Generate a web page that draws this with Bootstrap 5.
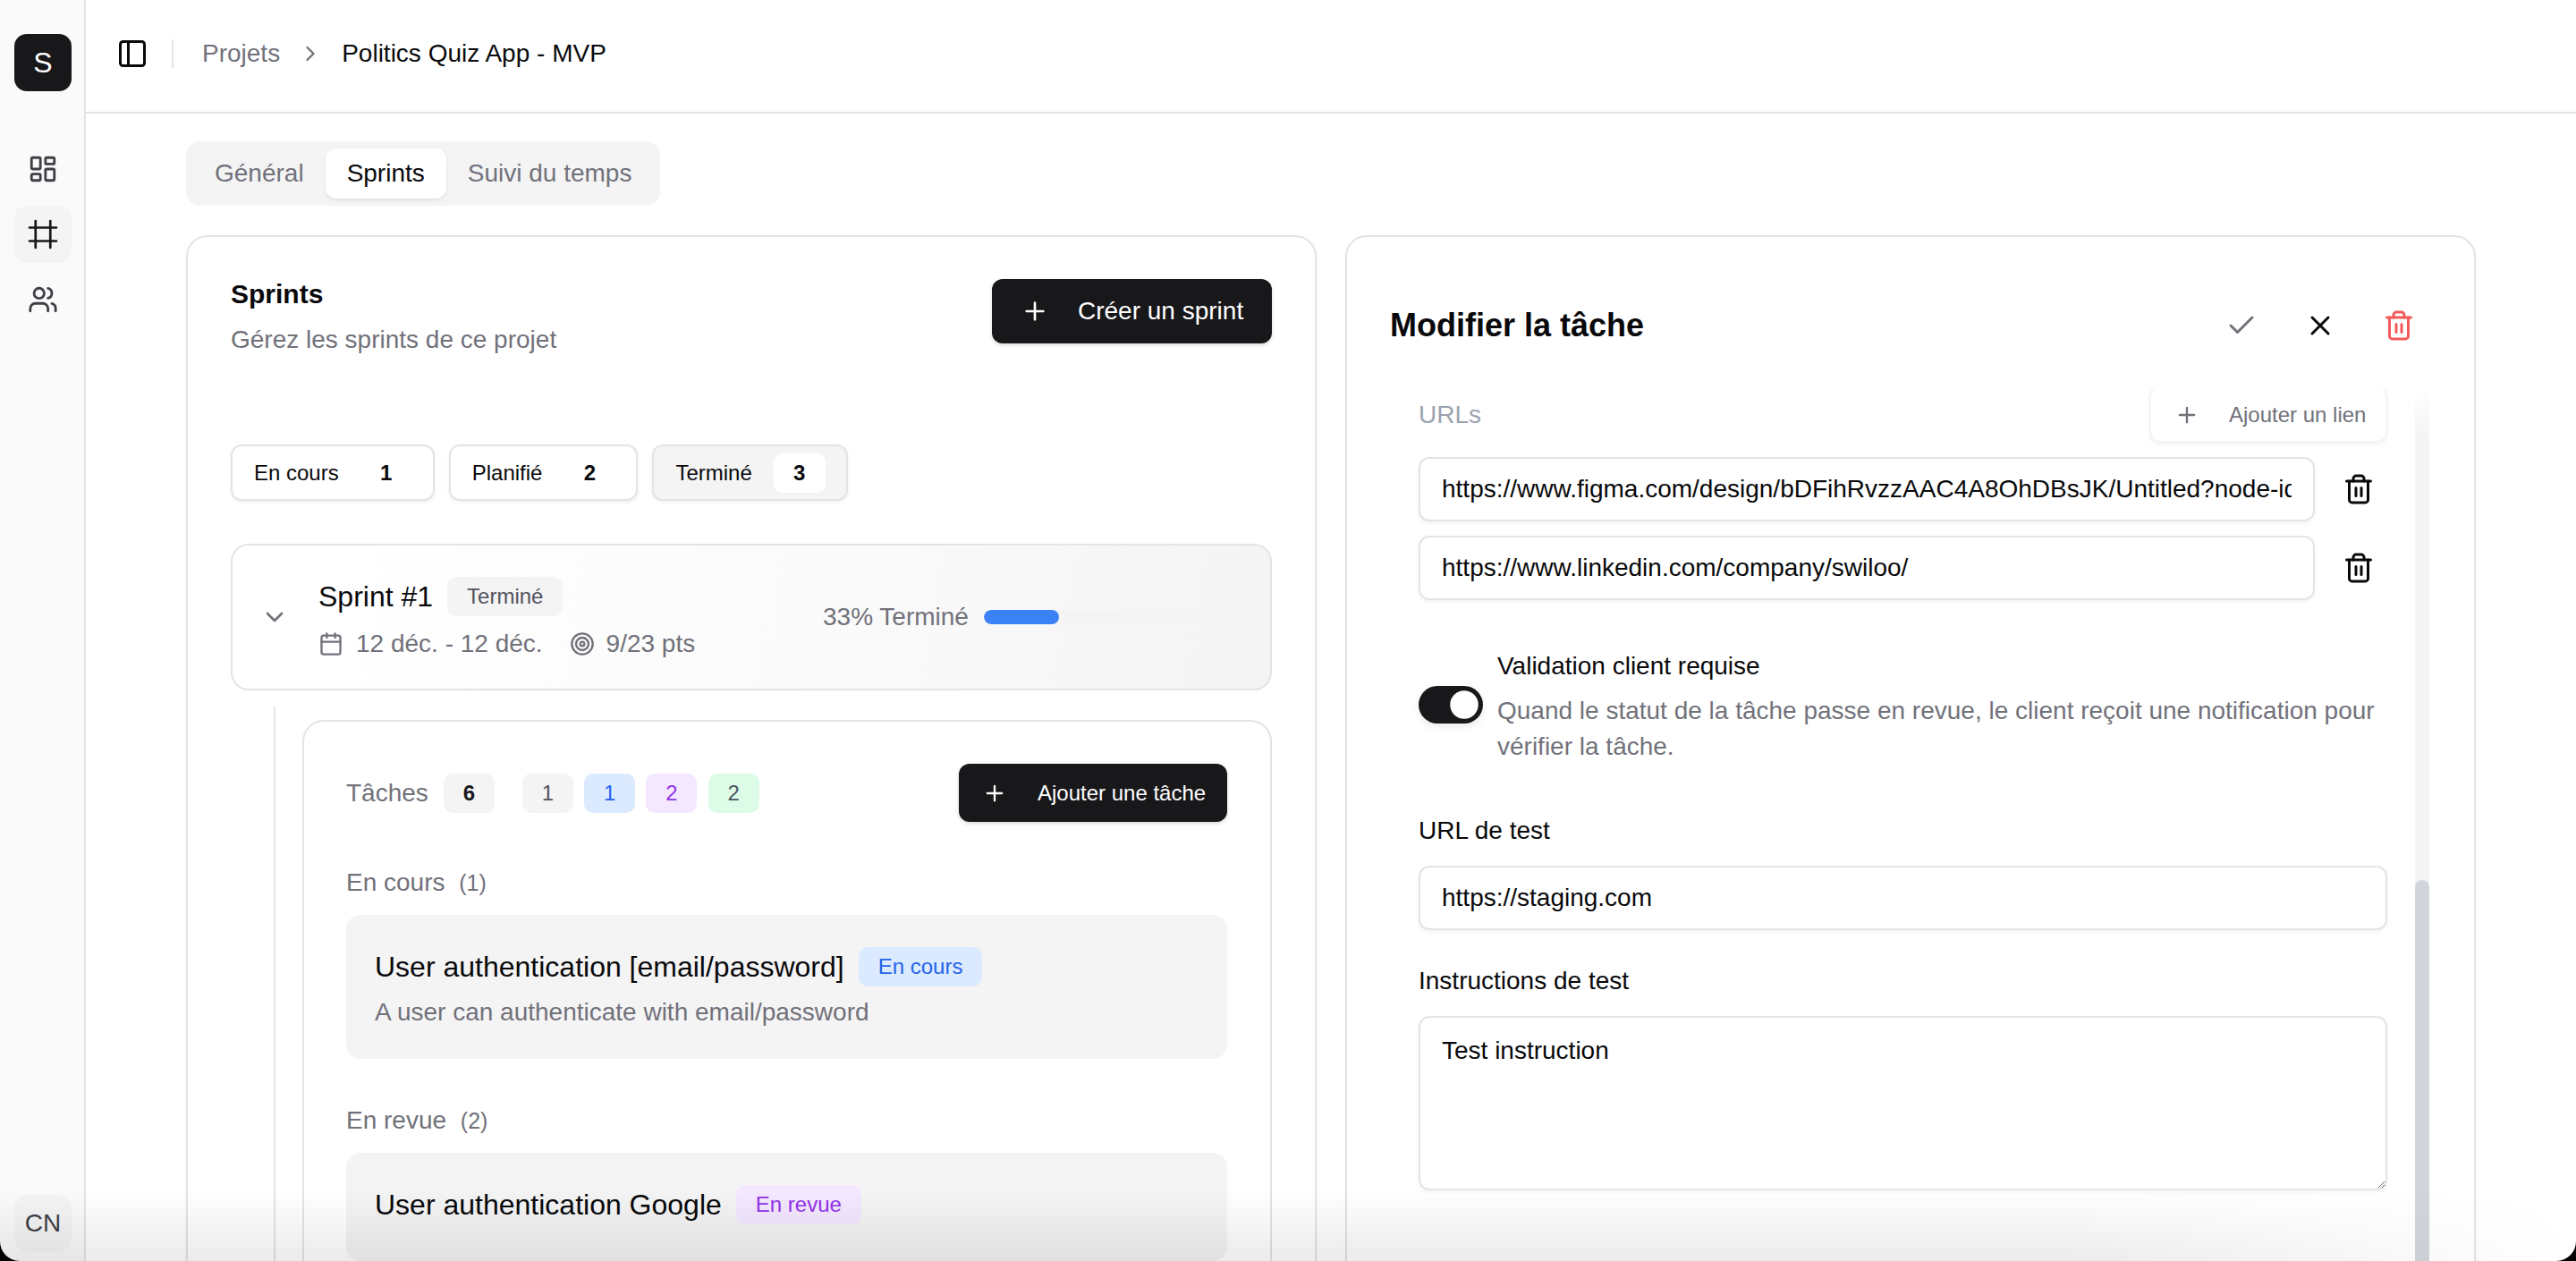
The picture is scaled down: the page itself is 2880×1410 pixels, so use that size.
<!DOCTYPE html>
<html lang="fr">
<head>
  <meta charset="UTF-8" />
  <title>Politics Quiz App - MVP</title>
  <link href="https://cdn.jsdelivr.net/npm/bootstrap@5.3.3/dist/css/bootstrap.min.css" rel="stylesheet" />
  <style>
    html, body { height: 1410px; overflow: hidden; }
    body { font-family: "Liberation Sans", Arial, sans-serif; font-size: 28px; color: #09090b; background: #fff; }
    .ico { width: 36px; height: 36px; fill: none; stroke: currentColor; stroke-width: 2; stroke-linecap: round; stroke-linejoin: round; flex: none; }
    .ico-28 { width: 28px; height: 28px; }
    .ico-32 { width: 32px; height: 32px; }
    .ico-34 { width: 34px; height: 34px; }
    .ico-thin { stroke-width: 1.8; }
    .muted { color: #71717a; }

    .side { width: 96px; flex: none; background: #fafafa; border-right: 2px solid #e4e4e7; padding: 38px 14px 10px 16px; }
    .logo { width: 64px; height: 64px; border-radius: 14px; background: #18181b; color: #fff; font-size: 32px; margin-bottom: 55px; }
    .side-item { width: 64px; height: 64px; border-radius: 14px; color: #3f3f46; margin-bottom: 9px; }
    .side-item.on { background: #f4f4f5; color: #18181b; }
    .avatar { width: 64px; height: 64px; border-radius: 16px; background: #f4f4f5; color: #3f3f46; font-size: 28px; margin-top: auto; }

    .top { height: 127px; flex: none; border-bottom: 2px solid #e4e4e7; padding: 0 34px 5px; }
    .top-sep { width: 2px; height: 32px; background: #e4e4e7; margin: 0 32px 0 26px; }
    .crumb-ico { color: #71717a; margin: 0 21px 0 20px; }

    .content { padding: 31px 112px 0; min-height: 0; }
    .tabs { padding: 8px; background: #f4f4f5; border-radius: 16px; height: 72px; margin-bottom: 33px; }
    .tabs .nav-link { height: 56px; padding: 0 24px; border-radius: 12px; color: #71717a; display: flex; align-items: center; }
    .tabs .nav-link.active { background: #fff; color: #09090b; box-shadow: 0 2px 4px rgba(0,0,0,.08); }

    .pane { width: 1264px; flex: none; height: 1300px; border: 2px solid #e4e4e7; border-radius: 24px; box-shadow: 0 2px 4px rgba(0,0,0,.04); background: #fff; }
    .pane-left { padding: 46px 48px 0; }
    .pane-title { font-size: 30px; font-weight: 700; line-height: 36px; }
    .pane-sub { line-height: 40px; margin-top: 13px; }
    .btn-dark-x { background: #18181b; color: #fff; border: 0; border-radius: 12px; font-size: 28px; box-shadow: 0 2px 4px rgba(0,0,0,.15); display: flex; align-items: center; }
    .btn-dark-x:hover { background: #18181b; color: #fff; }
    .btn-sprint { height: 72px; width: 313px; padding: 0 0 0 32px; gap: 32px; margin-top: 1px; }
    .btn-task { height: 65px; width: 300px; padding: 0 0 0 26px; gap: 34px; font-size: 24px; }

    .filters { margin-top: 97px; margin-bottom: 48px; gap: 16px; }
    .filter { height: 63px; padding: 0 24px; border: 2px solid #e4e4e7; border-radius: 12px; background: #fff; font-size: 24px; color: #09090b; box-shadow: 0 2px 4px rgba(0,0,0,.06); }
    .filter:hover { background: #fff; border-color: #e4e4e7; color: #09090b; }
    .filter.on, .filter.on:hover { background: #f4f4f5; }
    .filter b { width: 58px; height: 44px; border-radius: 10px; margin-left: 24px; margin-right: -1px; display: inline-flex; align-items: center; justify-content: center; }
    .filter.on b { background: #fff; }

    .sprint { height: 164px; border: 2px solid #e4e4e7; border-radius: 20px; padding: 0 0 0 31px; background: linear-gradient(100deg, #fff 10%, #fafafa 60%, #f4f4f5 100%); }
    .sprint-info { width: 564px; flex: none; margin-left: 33px; padding-top: 2px; }
    .sprint-name { font-size: 32px; }
    .pill { height: 44px; padding: 0 22px; border-radius: 10px; font-size: 24px; font-weight: 400; display: inline-flex; align-items: center; }
    .pill-gray { background: #f4f4f5; color: #52525b; }
    .pill-blue { background: #dbeafe; color: #2563eb; }
    .pill-purple { background: #f3e8ff; color: #9333ea; }
    .pill-green { background: #dcfce7; color: #4b5563; }
    .sprint-meta { line-height: 40px; margin-top: 9px; color: #71717a; }
    .meta-date { margin-right: 14px; }
    .meta-pts { margin: 0 13px 0 30px; }
    .bar { width: 255px; height: 16px; margin-left: 17px; border-radius: 8px; background: #f4f4f5; }
    .bar .progress-bar { background: #3b82f6; border-radius: 8px; }

    .tree { margin: 18px 0 0 48px; padding: 15px 0 0 30px; border-left: 2px solid #e4e4e7; }
    .tasks { border: 2px solid #e4e4e7; border-radius: 24px; padding: 47px 48px 0 47px; height: 800px; }
    .chip { width: 57px; height: 44px; padding: 0; justify-content: center; }
    .chip-count { font-weight: 700; color: #18181b; margin: 0 31px 0 17px; }
    .chips { gap: 12.3px; }
    .group { line-height: 40px; margin-top: 48px; }
    .group span { font-size: 25px; margin-left: 8px; }
    .group-next { margin-top: 49px; }
    .task { margin-top: 16px; background: #f4f4f5; border-radius: 16px; padding: 34px 32px 32px; }
    .task-short { padding-bottom: 39px; }
    .task-name { font-size: 32px; }
    .task-desc { line-height: 40px; margin-top: 7px; color: #71717a; }

    .pane-right { padding: 0 50px 0 48px; }
    .edit-head { height: 98px; margin: 50px 0 19px; }
    .edit-title { font-size: 36px; font-weight: 700; }
    .edit-actions { gap: 52px; margin-right: 16px; }
    .trash-red { color: #f25a5a; }
    .edit-body { height: 1000px; }
    .edit-form { width: 1146px; flex: none; padding: 0 31px 0 32px; }
    .track { width: 16px; flex: none; background: linear-gradient(#fff, #f4f4f5 60px); }
    .thumb { height: 460px; margin-top: 552px; background: #d1d5db; border-radius: 8px; }
    .urls-label { color: #9ca3af; }
    .btn-link-add { width: 266px; height: 63px; padding: 0 0 0 26px; gap: 33px; background: #fff; border: 2px solid #f4f4f5; border-top-color: transparent; border-radius: 12px; color: #71717a; font-size: 24px; box-shadow: 0 2px 4px rgba(0,0,0,.06); display: flex; align-items: center; }
    .form-control.field { height: 72px; padding: 0 24px; border: 2px solid #e4e4e7; border-radius: 12px; font-size: 28px; color: #09090b; box-shadow: 0 2px 4px rgba(0,0,0,.05); }
    textarea.form-control.field { height: 195px; padding: 18px 24px; line-height: 38px; }
    .url-row { gap: 31px; margin-top: 16px; }
    .url-row .field { width: 1002px; flex: none; }
    .switch-row { margin-top: 54px; gap: 16px; }
    .form-switch { padding: 0; margin: 42px 0 0; min-height: 0; }
    .form-switch .form-check-input { width: 72px; height: 42px; margin: 0; float: none; border: 0; background-color: #18181b; box-shadow: 0 4px 8px rgba(0,0,0,.08);
      --bs-form-switch-bg: url("data:image/svg+xml,%3csvg xmlns='http://www.w3.org/2000/svg' viewBox='-4 -4 8 8'%3e%3ccircle r='3.3' fill='%23fff'/%3e%3c/svg%3e"); }
    .switch-label, .switch-help { line-height: 40px; }
    .switch-help { margin-top: 10px; color: #71717a; }
    .field-label { display: block; line-height: 40px; margin: 54px 0 19px; }
    .field-label.tight { margin-top: 37px; }

    .fade-bottom { position: fixed; left: 0; right: 0; bottom: 0; height: 80px; background: linear-gradient(rgba(0,0,0,0), rgba(0,0,0,.08)); pointer-events: none; -webkit-mask-image: linear-gradient(to right, #000 80%, transparent); mask-image: linear-gradient(to right, #000 80%, transparent); }
    .window-edge { position: fixed; inset: 0; border-radius: 0 0 22px 22px; box-shadow: 0 0 0 30px #000; pointer-events: none; }
  </style>
</head>
<body>
  <svg width="0" height="0" class="position-absolute">
    <symbol id="i-dash" viewBox="0 0 24 24"><rect x="3" y="3" width="7" height="9" rx="1"/><rect x="14" y="3" width="7" height="5" rx="1"/><rect x="14" y="12" width="7" height="9" rx="1"/><rect x="3" y="16" width="7" height="5" rx="1"/></symbol>
    <symbol id="i-hash" viewBox="0 0 24 24"><path d="M2 7h20M2 17h20M6.5 2v20M17.5 2v20"/></symbol>
    <symbol id="i-users" viewBox="0 0 24 24"><path d="M16 21v-2a4 4 0 0 0-4-4H6a4 4 0 0 0-4 4v2"/><circle cx="9" cy="7" r="4"/><path d="M22 21v-2a4 4 0 0 0-3-3.87"/><path d="M16 3.13a4 4 0 0 1 0 7.75"/></symbol>
    <symbol id="i-panel" viewBox="0 0 24 24"><rect x="3" y="3" width="18" height="18" rx="2"/><path d="M9 3v18"/></symbol>
    <symbol id="i-right" viewBox="0 0 24 24"><path d="m9 18 6-6-6-6"/></symbol>
    <symbol id="i-down" viewBox="0 0 24 24"><path d="m6 9 6 6 6-6"/></symbol>
    <symbol id="i-plus" viewBox="0 0 24 24"><path d="M5 12h14M12 5v14"/></symbol>
    <symbol id="i-cal" viewBox="0 0 24 24"><path d="M8 2v4M16 2v4"/><rect x="3" y="4" width="18" height="18" rx="2"/><path d="M3 10h18"/></symbol>
    <symbol id="i-target" viewBox="0 0 24 24"><circle cx="12" cy="12" r="10"/><circle cx="12" cy="12" r="6"/><circle cx="12" cy="12" r="2"/></symbol>
    <symbol id="i-check" viewBox="0 0 24 24"><path d="M20 6 9 17l-5-5"/></symbol>
    <symbol id="i-x" viewBox="0 0 24 24"><path d="M18 6 6 18M6 6l12 12"/></symbol>
    <symbol id="i-trash" viewBox="0 0 24 24"><path d="M3 6h18"/><path d="M19 6v14c0 1-1 2-2 2H7c-1 0-2-1-2-2V6"/><path d="M8 6V4c0-1 1-2 2-2h4c1 0 2 1 2 2v2"/><path d="M10 11v6M14 11v6"/></symbol>
  </svg>

  <div class="d-flex vh-100">
    <aside class="side d-flex flex-column">
      <div class="logo d-flex align-items-center justify-content-center">S</div>
      <div class="side-item d-flex align-items-center justify-content-center"><svg class="ico ico-34"><use href="#i-dash"/></svg></div>
      <div class="side-item on d-flex align-items-center justify-content-center"><svg class="ico ico-thin"><use href="#i-hash"/></svg></div>
      <div class="side-item d-flex align-items-center justify-content-center"><svg class="ico ico-34"><use href="#i-users"/></svg></div>
      <div class="avatar d-flex align-items-center justify-content-center">CN</div>
    </aside>

    <div class="flex-grow-1 d-flex flex-column overflow-hidden">
      <header class="top d-flex align-items-center">
        <svg class="ico"><use href="#i-panel"/></svg>
        <div class="top-sep"></div>
        <span class="muted">Projets</span>
        <svg class="ico ico-28 crumb-ico"><use href="#i-right"/></svg>
        <span>Politics Quiz App - MVP</span>
      </header>

      <main class="content flex-grow-1 overflow-hidden">
        <ul class="nav tabs d-inline-flex">
          <li class="nav-item"><a class="nav-link" href="#">Général</a></li>
          <li class="nav-item"><a class="nav-link active" href="#">Sprints</a></li>
          <li class="nav-item"><a class="nav-link" href="#">Suivi du temps</a></li>
        </ul>

        <div class="d-flex gap-0 justify-content-between">
          <section class="pane pane-left">
            <div class="d-flex justify-content-between align-items-start">
              <div>
                <div class="pane-title">Sprints</div>
                <div class="pane-sub muted">Gérez les sprints de ce projet</div>
              </div>
              <button class="btn btn-dark-x btn-sprint"><svg class="ico ico-32"><use href="#i-plus"/></svg>Créer un sprint</button>
            </div>

            <div class="filters d-flex">
              <button class="btn filter d-flex align-items-center">En cours<b>1</b></button>
              <button class="btn filter d-flex align-items-center">Planifié<b>2</b></button>
              <button class="btn filter on d-flex align-items-center">Terminé<b>3</b></button>
            </div>

            <div class="sprint d-flex align-items-center">
              <svg class="ico ico-32 muted"><use href="#i-down"/></svg>
              <div class="sprint-info">
                <div class="d-flex align-items-center gap-3">
                  <span class="sprint-name">Sprint #1</span>
                  <span class="badge pill pill-gray">Terminé</span>
                </div>
                <div class="sprint-meta d-flex align-items-center">
                  <svg class="ico ico-28 meta-date"><use href="#i-cal"/></svg>
                  <span>12 déc. - 12 déc.</span>
                  <svg class="ico ico-28 meta-pts"><use href="#i-target"/></svg>
                  <span>9/23 pts</span>
                </div>
              </div>
              <span class="muted">33% Terminé</span>
              <div class="progress bar">
                <div class="progress-bar" style="width: 33%"></div>
              </div>
            </div>

            <div class="tree">
              <div class="tasks">
                <div class="d-flex align-items-center">
                  <span class="muted">Tâches</span>
                  <span class="badge pill pill-gray chip chip-count">6</span>
                  <div class="chips d-flex">
                    <span class="badge pill pill-gray chip">1</span>
                    <span class="badge pill pill-blue chip">1</span>
                    <span class="badge pill pill-purple chip">2</span>
                    <span class="badge pill pill-green chip">2</span>
                  </div>
                  <button class="btn btn-dark-x btn-task ms-auto"><svg class="ico ico-28"><use href="#i-plus"/></svg>Ajouter une tâche</button>
                </div>

                <div class="group muted">En cours <span>(1)</span></div>
                <div class="task">
                  <div class="d-flex align-items-center gap-3">
                    <span class="task-name">User authentication [email/password]</span>
                    <span class="badge pill pill-blue">En cours</span>
                  </div>
                  <div class="task-desc">A user can authenticate with email/password</div>
                </div>

                <div class="group group-next muted">En revue <span>(2)</span></div>
                <div class="task task-short">
                  <div class="d-flex align-items-center gap-3">
                    <span class="task-name">User authentication Google</span>
                    <span class="badge pill pill-purple">En revue</span>
                  </div>
                </div>
              </div>
            </div>
          </section>

          <section class="pane pane-right">
            <div class="edit-head d-flex align-items-center justify-content-between">
              <div class="edit-title">Modifier la tâche</div>
              <div class="edit-actions d-flex">
                <svg class="ico muted"><use href="#i-check"/></svg>
                <svg class="ico"><use href="#i-x"/></svg>
                <svg class="ico trash-red"><use href="#i-trash"/></svg>
              </div>
            </div>

            <div class="edit-body d-flex">
              <form class="edit-form">
                <div class="d-flex align-items-center justify-content-between">
                  <span class="urls-label">URLs</span>
                  <button type="button" class="btn-link-add"><svg class="ico ico-28"><use href="#i-plus"/></svg>Ajouter un lien</button>
                </div>
                <div class="url-row d-flex align-items-center">
                  <input class="form-control field" value="https://www.figma.com/design/bDFihRvzzAAC4A8OhDBsJK/Untitled?node-id=0-1" />
                  <svg class="ico"><use href="#i-trash"/></svg>
                </div>
                <div class="url-row d-flex align-items-center">
                  <input class="form-control field" value="https://www.linkedin.com/company/swiloo/" />
                  <svg class="ico"><use href="#i-trash"/></svg>
                </div>

                <div class="switch-row d-flex">
                  <div class="form-check form-switch">
                    <input class="form-check-input" type="checkbox" role="switch" checked />
                  </div>
                  <div>
                    <div class="switch-label">Validation client requise</div>
                    <div class="switch-help">Quand le statut de la tâche passe en revue, le client reçoit une notification pour vérifier la tâche.</div>
                  </div>
                </div>

                <label class="field-label">URL de test</label>
                <input class="form-control field" value="https://staging.com" />
                <label class="field-label tight">Instructions de test</label>
                <textarea class="form-control field">Test instruction</textarea>
              </form>
              <div class="track"><div class="thumb"></div></div>
            </div>
          </section>
        </div>
      </main>
    </div>
  </div>

  <div class="fade-bottom"></div>
  <div class="window-edge"></div>
</body>
</html>
